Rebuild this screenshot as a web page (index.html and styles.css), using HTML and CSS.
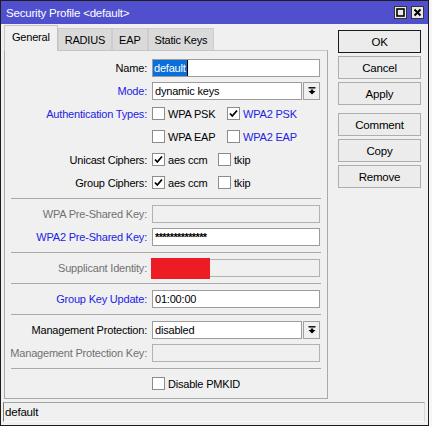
FILE: index.html
```html
<!DOCTYPE html>
<html>
<head>
<meta charset="utf-8">
<link rel="stylesheet" href="styles.css">
</head>
<body>
<div class="window">
  <div class="titlebar">
    <span class="title">Security Profile &lt;default&gt;</span>
    <div class="tbtns">
      <span class="tbtn"><svg width="9" height="9" viewBox="0 0 9 9"><rect x="1" y="1" width="7" height="7" fill="none" stroke="#000" stroke-width="1.6"/></svg></span>
      <span class="tbtn"><svg width="9" height="9" viewBox="0 0 9 9"><path d="M1.5 1.5 L7.5 7.5 M7.5 1.5 L1.5 7.5" stroke="#000" stroke-width="2"/></svg></span>
    </div>
  </div>
  <div class="body">
    <div class="main">
      <div class="tabs">
        <span class="tab active">General</span>
        <span class="tab">RADIUS</span>
        <span class="tab">EAP</span>
        <span class="tab">Static Keys</span>
      </div>
      <div class="panel">
        <div class="row">
          <span class="label">Name:</span>
          <div class="field name"><span class="sel">default</span></div>
        </div>
        <div class="row">
          <span class="label blue">Mode:</span>
          <div class="select">
            <div class="field">dynamic keys</div>
            <span class="ddbtn"><svg width="8" height="8" viewBox="0 0 8 8"><path d="M0.5 0.8 H7.5" stroke="#000" stroke-width="1.4"/><polygon points="2.8,2.4 5.2,2.4 5.2,4 7.5,4 4,7.6 0.5,4 2.8,4" fill="#000"/></svg></span>
          </div>
        </div>
        <div class="row">
          <span class="label blue">Authentication Types:</span>
          <div class="opts">
            <span class="opt wa"><span class="cb"></span>WPA PSK</span>
            <span class="opt blue"><span class="cb"><svg width="11" height="11" viewBox="0 0 11 11"><path d="M2 5.5 L4.3 8 L9 2.5" fill="none" stroke="#000" stroke-width="1.8"/></svg></span>WPA2 PSK</span>
          </div>
        </div>
        <div class="row">
          <span class="label"></span>
          <div class="opts">
            <span class="opt wa"><span class="cb"></span>WPA EAP</span>
            <span class="opt blue"><span class="cb"></span>WPA2 EAP</span>
          </div>
        </div>
        <div class="row">
          <span class="label">Unicast Ciphers:</span>
          <div class="opts">
            <span class="opt wc"><span class="cb"><svg width="11" height="11" viewBox="0 0 11 11"><path d="M2 5.5 L4.3 8 L9 2.5" fill="none" stroke="#000" stroke-width="1.8"/></svg></span>aes ccm</span>
            <span class="opt"><span class="cb"></span>tkip</span>
          </div>
        </div>
        <div class="row">
          <span class="label">Group Ciphers:</span>
          <div class="opts">
            <span class="opt wc"><span class="cb"><svg width="11" height="11" viewBox="0 0 11 11"><path d="M2 5.5 L4.3 8 L9 2.5" fill="none" stroke="#000" stroke-width="1.8"/></svg></span>aes ccm</span>
            <span class="opt"><span class="cb"></span>tkip</span>
          </div>
        </div>
        <div class="sep"></div>
        <div class="row">
          <span class="label gray">WPA Pre-Shared Key:</span>
          <div class="field off"></div>
        </div>
        <div class="row">
          <span class="label blue">WPA2 Pre-Shared Key:</span>
          <div class="field pw">**************</div>
        </div>
        <div class="sep"></div>
        <div class="row">
          <span class="label gray">Supplicant Identity:</span>
          <div class="field off redacted"><span class="redbox"></span></div>
        </div>
        <div class="sep"></div>
        <div class="row">
          <span class="label blue">Group Key Update:</span>
          <div class="field">01:00:00</div>
        </div>
        <div class="sep"></div>
        <div class="row">
          <span class="label">Management Protection:</span>
          <div class="select">
            <div class="field">disabled</div>
            <span class="ddbtn"><svg width="8" height="8" viewBox="0 0 8 8"><path d="M0.5 0.8 H7.5" stroke="#000" stroke-width="1.4"/><polygon points="2.8,2.4 5.2,2.4 5.2,4 7.5,4 4,7.6 0.5,4 2.8,4" fill="#000"/></svg></span>
          </div>
        </div>
        <div class="row">
          <span class="label gray">Management Protection Key:</span>
          <div class="field off"></div>
        </div>
        <div class="sep"></div>
        <div class="row">
          <span class="label"></span>
          <span class="opt"><span class="cb"></span>Disable PMKID</span>
        </div>
      </div>
    </div>
    <div class="side">
      <span class="btn default">OK</span>
      <span class="btn">Cancel</span>
      <span class="btn">Apply</span>
      <span class="btn group">Comment</span>
      <span class="btn">Copy</span>
      <span class="btn">Remove</span>
    </div>
  </div>
  <div class="status">default</div>
</div>
</body>
</html>
```
FILE: styles.css
```css
* { box-sizing: border-box; }
html, body { margin: 0; padding: 0; }
body {
  width: 432px;
  height: 426px;
  overflow: hidden;
  background: #f6f6f6;
  font-family: "Liberation Sans", Arial, sans-serif;
  font-size: 11px;
  letter-spacing: -0.2px;
  color: #000;
}
.window {
  width: 429px;
  height: 426px;
  border: 1px solid #1c1c1c;
  background: #f0f0f0;
  display: flex;
  flex-direction: column;
}
.titlebar {
  flex: none;
  height: 23px;
  background: #5050cf;
  color: #fff;
  display: flex;
  align-items: center;
  padding: 0 4px 0 5px;
}
.title { flex: 1; font-size: 11.5px; }
.tbtns { display: flex; gap: 4px; }
.tbtn {
  width: 13px;
  height: 13px;
  background: #e9e9e9;
  border: 1px solid #333;
  display: flex;
  align-items: center;
  justify-content: center;
}
.body { display: flex; flex: none; }
.main { margin: 1px 0 0 3px; width: 324px; }
.tabs { display: flex; align-items: flex-end; height: 25px; }
.tab {
  height: 22px;
  padding: 0 6px;
  background: #dadada;
  border: 1px solid #cdcdcd;
  border-bottom: none;
  display: flex;
  align-items: center;
  font-size: 11px;
}
.tab.active {
  height: 26px;
  margin-bottom: -1px;
  padding: 0 7px 3px;
  background: #f0f0f0;
  border-color: #c4c4c4;
  position: relative;
  z-index: 1;
}
.panel {
  height: 349px;
  border: 1px solid #a9a9a9;
  border-top-color: #c6c6c6;
  padding: 5px 6px 3px 0;
}
.row { display: flex; align-items: center; height: 23px; }
.label { width: 142px; margin-right: 5px; text-align: right; white-space: nowrap; }
.blue { color: #2222e4; }
.gray { color: #707070; }
.field {
  width: 168px;
  height: 18px;
  border: 1px solid #9c9c9c;
  background: #fff;
  padding: 0 2px;
  display: flex;
  align-items: center;
  white-space: nowrap;
  overflow: hidden;
}
.field.off { background: #f0f0f0; border-color: #b2b2b2; }
.field.name { padding-left: 0; }
.sel {
  background: #0a6fd8;
  color: #fff;
  line-height: 16px;
  padding: 0 1px;
  border-right: 1px solid #000;
}
.field.pw { font-weight: bold; letter-spacing: -0.6px; align-items: flex-start; padding-top: 2px; }
.redacted { position: relative; overflow: visible; }
.redbox {
  position: absolute;
  left: -2px;
  top: -2px;
  width: 59px;
  height: 21px;
  background: #ed1c24;
}
.select { display: flex; gap: 1px; width: 168px; }
.select .field { width: 150px; }
.ddbtn {
  width: 17px;
  height: 18px;
  border: 1px solid #a0a0a0;
  background: #f0f0f0;
  display: flex;
  align-items: center;
  justify-content: center;
}
.opts { display: flex; }
.opt { display: flex; align-items: center; gap: 3px; white-space: nowrap; }
.opt.wa { width: 75px; }
.opt.wc { width: 66px; }
.cb {
  width: 13px;
  height: 13px;
  border: 1px solid #8c8c8c;
  background: #fff;
  display: flex;
  align-items: center;
  justify-content: center;
  flex: none;
}
.sep { height: 1px; background: #a9a9a9; margin: 4px 0 3px 6px; }
.side {
  margin: 6px 0 0 10px;
  width: 83px;
  display: flex;
  flex-direction: column;
  gap: 3px;
}
.btn {
  height: 23px;
  border: 1px solid #adadad;
  background: #ececec;
  display: flex;
  align-items: center;
  justify-content: center;
  font-size: 11.5px;
}
.btn.default { border-color: #1a1a1a; }
.btn.group { margin-top: 5px; }
.status {
  margin: 3px 3px 0 2px;
  height: 20px;
  border: 1px solid;
  border-color: #a3a3a3 #d6d6d6 #fafafa #7a7a7a;
  padding: 0 1px;
  display: flex;
  align-items: center;
  font-size: 11.5px;
}
```
